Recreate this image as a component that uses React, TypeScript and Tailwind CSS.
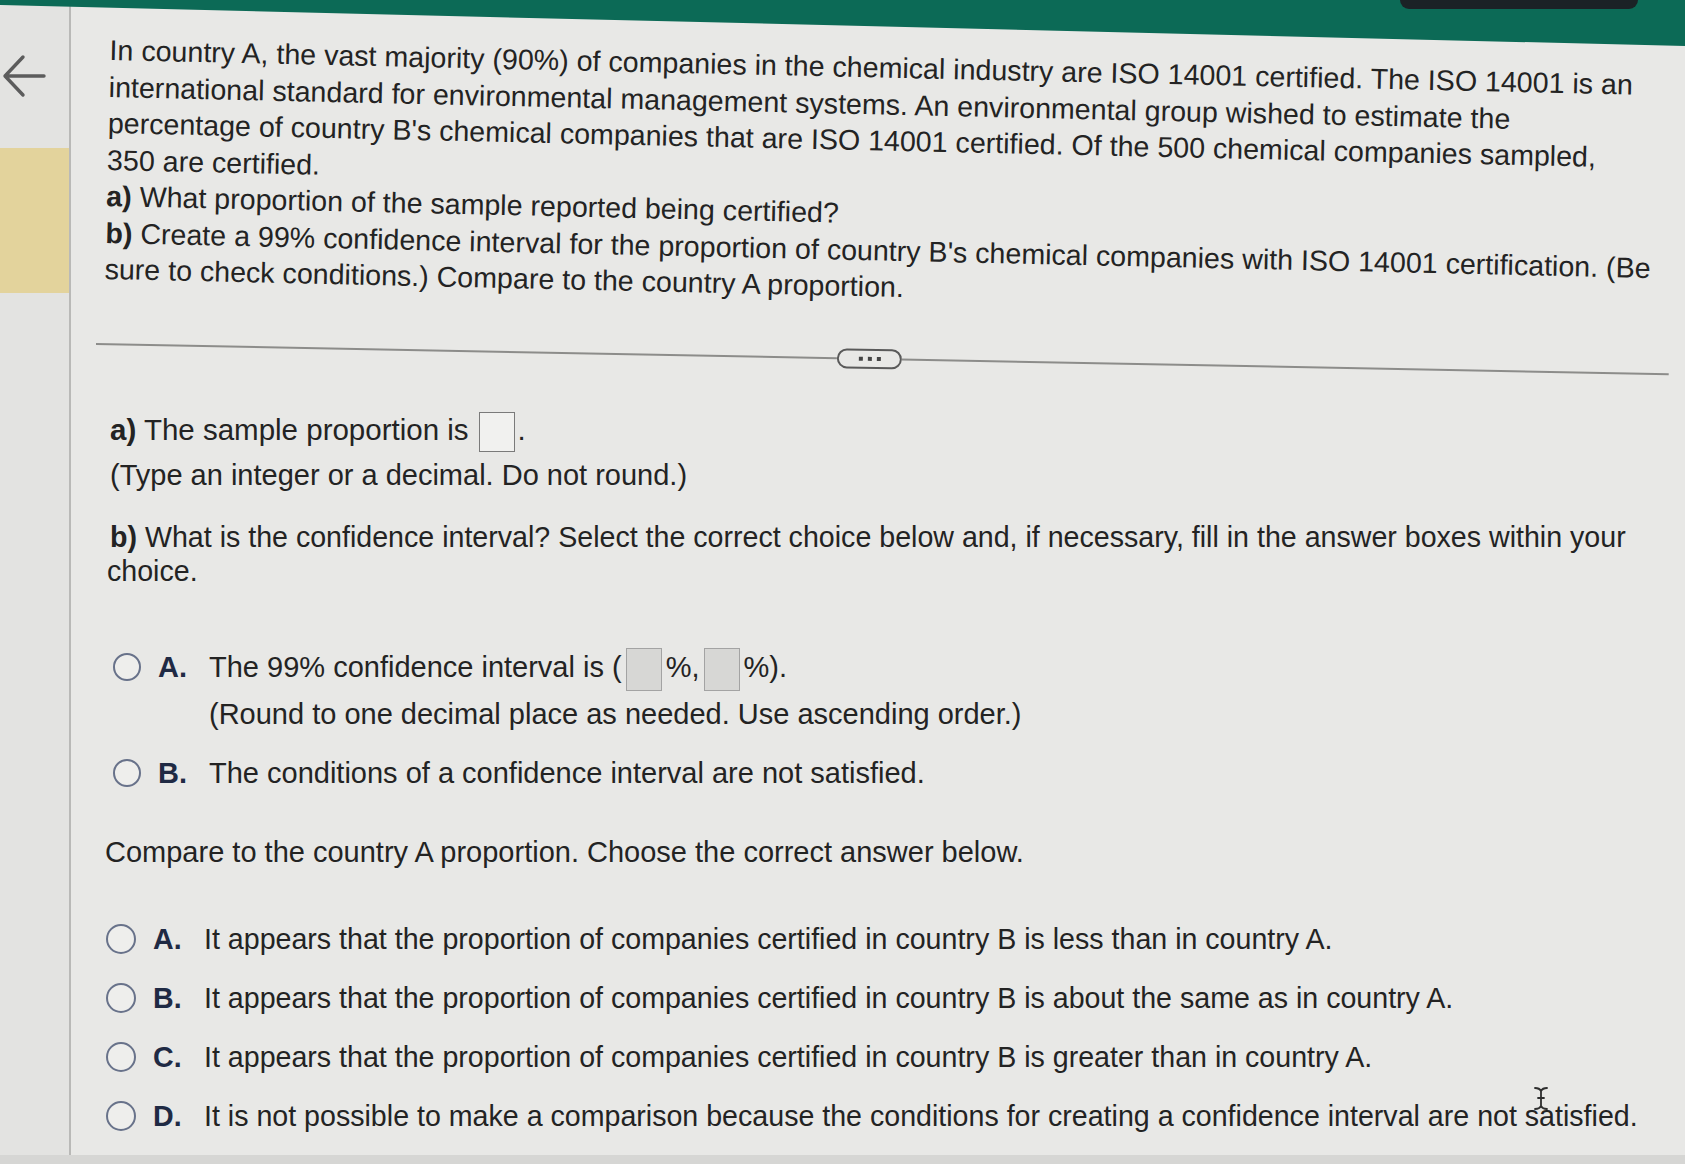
function Radio({ big }: { big?: boolean }) {
  return (
    <span
      className={
        big
          ? "block w-[30px] h-[30px] shrink-0 rounded-full border-[2.5px] border-[#68728a] bg-[#eeeeec]"
          : "block w-[28px] h-[28px] shrink-0 rounded-full border-[2.5px] border-[#68728a] bg-[#eeeeec]"
      }
    />
  );
}

function Box({ grey }: { grey?: boolean }) {
  return (
    <span
      className={
        grey
          ? "inline-block w-[36px] h-[43px] -my-[4px] mx-[4px] align-middle border border-[#a3a3a3] bg-[#d7d7d5]"
          : "inline-block w-[36px] h-[40px] -my-[3px] ml-[10px] mr-[3px] align-middle border border-[#7a7a7a] bg-[#f1f1ef]"
      }
    />
  );
}

const compareOptions = [
  { letter: "A.", text: "It appears that the proportion of companies certified in country B is less than in country A." },
  { letter: "B.", text: "It appears that the proportion of companies certified in country B is about the same as in country A." },
  { letter: "C.", text: "It appears that the proportion of companies certified in country B is greater than in country A." },
  { letter: "D.", text: "It is not possible to make a comparison because the conditions for creating a confidence interval are not satisfied." },
];

export default function App() {
  return (
    <div className="min-h-screen w-full flex flex-col overflow-hidden bg-[#e8e8e6] text-[#232323] font-['Liberation_Sans',Arial,sans-serif]">
      {/* top bar */}
      <div className="h-[46px] shrink-0 flex justify-end bg-[#0c6a56] [clip-path:polygon(0_0,100%_0,100%_100%,0_11%)]">
        <div className="w-[238px] h-[9px] mr-[47px] rounded-b-[12px] bg-[#1b2226]" />
      </div>

      <div className="flex flex-1 -mt-[40px]">
        {/* side rail */}
        <aside className="w-[71px] shrink-0 flex flex-col bg-[#e3e3e1] border-r-2 border-[#b9b9b7]">
          <svg className="mt-[47px] ml-[2px]" width="44" height="46" viewBox="0 0 44 46" fill="none">
            <path d="M42 23H4M21 4L3 23l18 19" stroke="#5c5c5c" strokeWidth="3.4" strokeLinecap="round" strokeLinejoin="round" />
          </svg>
          <div className="mt-[49px] h-[145px] bg-[#e3d39c]" />
        </aside>

        <main className="flex-1 pl-[39px] pr-[16px] pt-[26px]">
          {/* problem statement */}
          <div className="text-[28.6px] leading-[36.5px] whitespace-nowrap rotate-[1.3deg] origin-top-left">
            <div>In country A, the vast majority (90%) of companies in the chemical industry are ISO 14001 certified. The ISO 14001 is an</div>
            <div>international standard for environmental management systems. An environmental group wished to estimate the</div>
            <div>percentage of country B's chemical companies that are ISO 14001 certified. Of the 500 chemical companies sampled,</div>
            <div>350 are certified.</div>
            <div>
              <span className="font-bold">a)</span> What proportion of the sample reported being certified?
            </div>
            <div>
              <span className="font-bold">b)</span> Create a 99% confidence interval for the proportion of country B's chemical companies with ISO 14001 certification. (Be
            </div>
            <div>sure to check conditions.) Compare to the country A proportion.</div>
          </div>

          {/* divider */}
          <div className="mt-[46px] -ml-[14px] flex items-center h-[20px] rotate-[1.1deg] origin-left">
            <div className="w-[741px] h-[2px] bg-[#8c8c8a]" />
            <div className="w-[65px] h-[20px] rounded-full border-2 border-[#5a5a5a] flex items-center justify-center gap-[5px]">
              <span className="w-[4px] h-[4px] bg-[#444]" />
              <span className="w-[4px] h-[4px] bg-[#444]" />
              <span className="w-[4px] h-[4px] bg-[#444]" />
            </div>
            <div className="flex-1 h-[2px] bg-[#8c8c8a]" />
          </div>

          {/* part a */}
          <div className="mt-[58px] text-[29.5px] leading-[36px] whitespace-nowrap">
            <span className="font-bold">a)</span> The sample proportion is
            <Box />.
          </div>
          <div className="mt-[8px] text-[29px] leading-[36px]">(Type an integer or a decimal. Do not round.)</div>

          {/* part b */}
          <div className="mt-[27px] text-[28.6px] leading-[34px]">
            <div>
              <span className="font-bold">b)</span> What is the confidence interval? Select the correct choice below and, if necessary, fill in the answer boxes within your
            </div>
            <div className="-ml-[3px]">choice.</div>
          </div>

          <div className="mt-[61px] ml-[3px] flex items-start text-[29px] leading-[36px]">
            <div className="h-[36px] flex items-center"><Radio /></div>
            <div className="w-[51px] ml-[17px] font-bold text-[#1f2a44]">A.</div>
            <div>
              <div className="whitespace-nowrap">
                The 99% confidence interval is (<Box grey />%,<Box grey />%).
              </div>
              <div className="mt-[9px]">(Round to one decimal place as needed. Use ascending order.)</div>
            </div>
          </div>

          <div className="mt-[23px] ml-[3px] flex items-start text-[29px] leading-[36px]">
            <div className="h-[36px] flex items-center"><Radio /></div>
            <div className="w-[51px] ml-[17px] font-bold text-[#1f2a44]">B.</div>
            <div>The conditions of a confidence interval are not satisfied.</div>
          </div>

          {/* compare */}
          <div className="mt-[43px] -ml-[5px] text-[29px] leading-[36px]">Compare to the country A proportion. Choose the correct answer below.</div>

          <div className="mt-[51px] -ml-[4px] flex flex-col gap-[23px]">
            {compareOptions.map((o) => (
              <div key={o.letter} className="relative flex items-start text-[28.6px] leading-[36px] whitespace-nowrap">
                <div className="h-[36px] flex items-center"><Radio big /></div>
                <div className="w-[51px] ml-[17px] font-bold text-[#1f2a44]">{o.letter}</div>
                <div>{o.text}</div>
                {o.letter === "D." && (
                  <svg className="absolute left-[1427px] -top-[12px]" width="16" height="25" viewBox="0 0 16 25" fill="none">
                    <path d="M2 2c3 0 5 1 6 3c1-2 3-3 6-3M8 5v15M2 23c3 0 5-1 6-3c1 2 3 3 6 3M5 12h6" stroke="#2e2e2e" strokeWidth="1.8" strokeLinecap="round" />
                  </svg>
                )}
              </div>
            ))}
          </div>
        </main>
      </div>

      <div className="h-[9px] shrink-0 bg-[#d6d6d4]" />
    </div>
  );
}
